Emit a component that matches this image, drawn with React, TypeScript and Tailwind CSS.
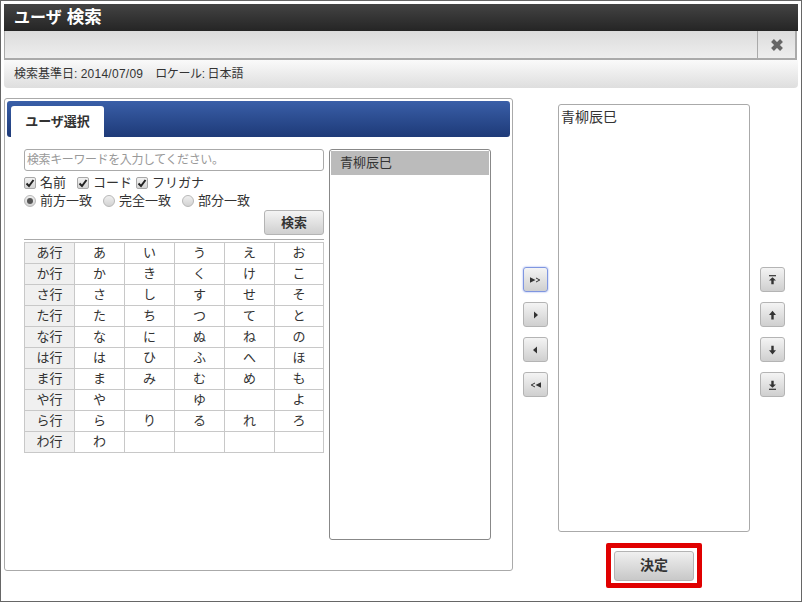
const font = { fontFamily: '"Liberation Sans","Noto Sans CJK JP",sans-serif' };

const rows = [
  ['あ行', 'あ', 'い', 'う', 'え', 'お'],
  ['か行', 'か', 'き', 'く', 'け', 'こ'],
  ['さ行', 'さ', 'し', 'す', 'せ', 'そ'],
  ['た行', 'た', 'ち', 'つ', 'て', 'と'],
  ['な行', 'な', 'に', 'ぬ', 'ね', 'の'],
  ['は行', 'は', 'ひ', 'ふ', 'へ', 'ほ'],
  ['ま行', 'ま', 'み', 'む', 'め', 'も'],
  ['や行', 'や', '', 'ゆ', '', 'よ'],
  ['ら行', 'ら', 'り', 'る', 'れ', 'ろ'],
  ['わ行', 'わ', '', '', '', ''],
];

const P = '#333';
const icons: Record<string, React.ReactNode> = {
  allRight: <><path d="M0 2.2v5.6L5.5 5z" fill={P} /><path d="M6 3 9.8 5 6 7" fill="none" stroke={P} strokeWidth="1" /></>,
  right: <path d="M4 1.5v7L8 5z" fill={P} />,
  left: <path d="M7 1.5v7L3 5z" fill={P} />,
  allLeft: <><path d="M11 2.2v5.6L5.5 5z" fill={P} /><path d="M5 3 1.2 5 5 7" fill="none" stroke={P} strokeWidth="1" /></>,
  top: <><path d="M2 .7h7" stroke={P} strokeWidth="1.2" /><path d="M5.5 2.2 9 5.6H6.7v3.6H4.3V5.6H2z" fill={P} /></>,
  up: <path d="M5.5 .8 9 5H6.7v4.4H4.3V5H2z" fill={P} />,
  down: <path d="M5.5 9.4 9 5.2H6.7V.8H4.3v4.4H2z" fill={P} />,
  bottom: <><path d="M2 9.3h7" stroke={P} strokeWidth="1.2" /><path d="M5.5 7.8 9 4.4H6.7V.8H4.3v3.6H2z" fill={P} /></>,
};

function IconButton({ name, focus }: { name: string; focus?: boolean }) {
  return (
    <button
      className={`flex h-[25px] w-[25px] items-center justify-center rounded-[3px] border bg-gradient-to-b from-[#f4f4f4] to-[#cfcfcf] ${
        focus ? 'border-[#7f96e0] shadow-[0_0_2px_#8aa0ee]' : 'border-[#b4b4b4]'
      }`}
    >
      <svg width="11" height="10" viewBox="0 0 11 10">{icons[name]}</svg>
    </button>
  );
}

function Check({ label, className }: { label: string; className: string }) {
  return (
    <span className={`flex items-center gap-[4px] ${className}`}>
      <span className="flex h-[12px] w-[12px] items-center justify-center rounded-[2px] border border-[#a8a8a8] bg-gradient-to-b from-[#f2f2f2] to-[#d4d4d4]">
        <svg width="10" height="10" viewBox="0 0 10 10">
          <path d="M1.5 5.5 4 8l4.5-6" fill="none" stroke="#222" strokeWidth="2" />
        </svg>
      </span>
      {label}
    </span>
  );
}

function Radio({ label, on, className }: { label: string; on?: boolean; className: string }) {
  return (
    <span className={`flex items-center gap-[4px] ${className}`}>
      <span className="flex h-[12px] w-[12px] items-center justify-center rounded-full border border-[#b8b8b8] bg-gradient-to-b from-[#efefef] to-[#d2d2d2]">
        {on && <span className="h-[6px] w-[6px] rounded-full bg-[#555]" />}
      </span>
      {label}
    </span>
  );
}

export default function App() {
  return (
    <div style={font} className="flex h-[602px] w-[802px] flex-col border border-[#666] bg-white px-[3px] pt-[3px] text-[#333]">
      <div className="flex h-[27px] shrink-0 items-center bg-gradient-to-b from-[#444] to-[#252525] pl-[10px] text-[16px] font-bold text-white">
        <span>ユーザ</span>
        <span className="ml-[5px] text-[17.5px]">検索</span>
      </div>
      <div className="mr-[1px] flex h-[29px] shrink-0 border-l border-r-2 border-b-2 border-[#aaa] bg-gradient-to-b from-[#dcdcdc] to-[#eee]">
        <div className="flex-1" />
        <div className="flex w-[38px] items-center justify-center border-l border-[#aaa]">
          <svg width="14" height="14" viewBox="0 0 14 14">
            <path d="M2.5 2.5l9 9M11.5 2.5l-9 9" stroke="#666" strokeWidth="4" />
          </svg>
        </div>
      </div>
      <div className="flex h-[28px] shrink-0 items-center rounded-b-[4px] bg-gradient-to-b from-[#fafafa] to-[#dedede] pl-[10px] text-[12px] text-[#333]">
        <span>検索基準日:&nbsp;</span>
        <span className="tracking-[0.25px]">2014/07/09</span>
        <span className="ml-[12px] tracking-[-0.4px]">ロケール:&nbsp;</span>
        <span>日本語</span>
      </div>
      <div className="flex min-h-0 flex-1">
        <div className="mt-[10px] h-[473px] w-[509px] rounded-[3px] border border-[#aaa] p-[2px]">
          <div className="flex h-[36px] items-end rounded-[3px] bg-gradient-to-b from-[#3a5fa8] to-[#1e3a78] pl-[4px]">
            <div className="flex h-[31px] w-[93px] items-center justify-center rounded-t-[3px] bg-white text-[13px] font-bold text-[#333]">
              ユーザ選択
            </div>
          </div>
          <div className="flex pl-[17px] pt-[12px]">
            <div className="w-[300px]">
              <div className="flex h-[22px] items-center rounded-[3px] border border-[#aaa] pl-[2px] text-[12px] tracking-[-0.4px] text-[#999]">
                検索キーワードを入力してください。
              </div>
              <div className="mt-[3px] flex h-[18px] items-center text-[13px]">
                <Check label="名前" className="w-[53px]" />
                <Check label="コード" className="w-[59px]" />
                <Check label="フリガナ" className="" />
              </div>
              <div className="flex h-[18px] items-center text-[13px]">
                <Radio label="前方一致" on className="w-[79px]" />
                <Radio label="完全一致" className="w-[79px]" />
                <Radio label="部分一致" className="" />
              </div>
              <div className="flex justify-end">
                <button className="h-[25px] w-[60px] rounded-[3px] border border-[#b4b4b4] bg-gradient-to-b from-[#f4f4f4] to-[#cfcfcf] text-[13px] font-bold text-[#333]">
                  検索
                </button>
              </div>
              <div className="mt-[4px] border-t border-[#aaa] pt-[2px]">
                <table className="w-[299px] table-fixed border-collapse text-[13px]">
                  <colgroup>
                    <col className="w-[50px]" />
                    <col className="w-[50px]" />
                    <col className="w-[50px]" />
                    <col className="w-[50px]" />
                    <col className="w-[50px]" />
                    <col className="w-[49px]" />
                  </colgroup>
                  <tbody>
                    {rows.map((r) => (
                      <tr key={r[0]} className="h-[21px]">
                        {r.map((c, i) => (
                          <td
                            key={i}
                            className={`border border-[#c8c8c8] p-0 text-center leading-[20px] ${i === 0 ? 'bg-[#f0f0f0]' : ''}`}
                          >
                            {c}
                          </td>
                        ))}
                      </tr>
                    ))}
                  </tbody>
                </table>
              </div>
            </div>
            <div className="ml-[5px] h-[391px] w-[162px] rounded-[3px] border border-[#888] p-[1px]">
              <div className="flex h-[24px] items-center bg-[#bbb] pl-[9px] text-[13px]">青柳辰巳</div>
            </div>
          </div>
        </div>
        <div className="ml-[10px] mt-[179px] flex w-[25px] flex-col gap-[10px]">
          <IconButton name="allRight" focus />
          <IconButton name="right" />
          <IconButton name="left" />
          <IconButton name="allLeft" />
        </div>
        <div className="ml-[10px] flex w-[192px] flex-col items-center pt-[16px]">
          <div className="h-[428px] w-[192px] rounded-[3px] border border-[#aaa] pl-[2px] pt-[2px] text-[14px]">青柳辰巳</div>
          <div className="mt-[11px] flex h-[45px] w-[96px] items-center justify-center rounded-[2px] border-[5px] border-[#e00000]">
            <button className="h-[30px] w-[80px] rounded-[3px] border border-[#b4b4b4] bg-gradient-to-b from-[#f0f0f0] to-[#c8c8c8] text-[14px] font-bold text-[#333]">
              決定
            </button>
          </div>
        </div>
        <div className="ml-[10px] mt-[179px] flex w-[25px] flex-col gap-[10px]">
          <IconButton name="top" />
          <IconButton name="up" />
          <IconButton name="down" />
          <IconButton name="bottom" />
        </div>
      </div>
    </div>
  );
}
